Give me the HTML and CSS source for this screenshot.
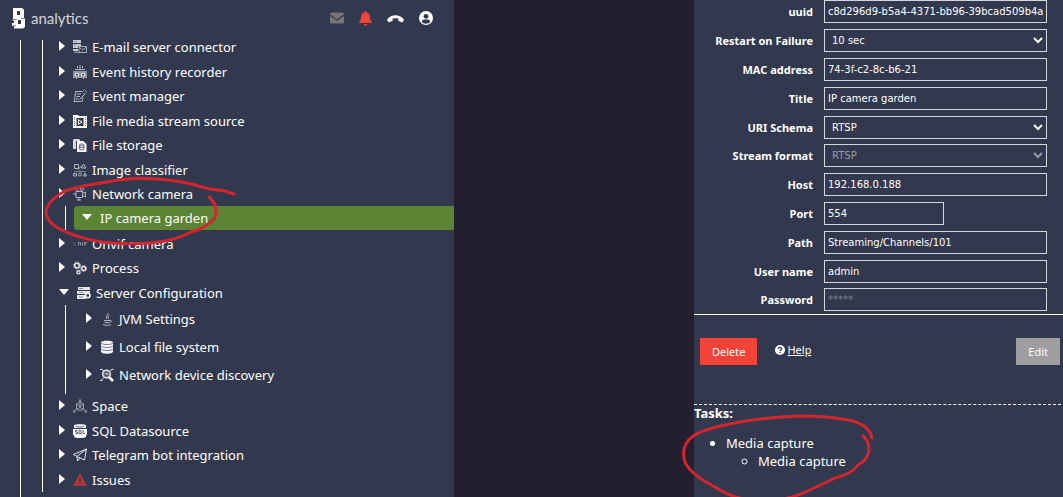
FILE: index.html
```
<!DOCTYPE html>
<html lang="en">
<head>
    <meta charset="UTF-8">
    <meta name="viewport" content="width=device-width, initial-scale=1.0">
    <title>B analytics</title>
    <link rel="stylesheet" href="styles.css">
</head>
<body>
    <aside class="sidebar">
        <header class="topbar">
            <a class="brand" href="#">
                <svg class="brand-logo" viewBox="0 0 14 21">
                    <path fill="#fff" fill-rule="evenodd" d="M1 0h9l2 1.500v8l1 1.500v8l-2 1.500H2V18H0v-3h2v-2H1zM5 3v4h3V3zM6 12v4h3v-4z"/>
                    <path stroke="#8a8fa0" stroke-width="1" d="M0 11.500h5M9 10.500h4M1 17.500h3"/>
                </svg>
                <span>analytics</span>
            </a>
            <nav class="topbar-actions">
                <button type="button" aria-label="Mail">
                    <svg width="14" height="12" viewBox="0 0 14 12"><rect y=".5" width="14" height="11" rx="1.500" fill="#757575"/><path d="M0 3l7 5 7-5" fill="none" stroke="#32384d" stroke-width="1.200"/></svg>
                </button>
                <button type="button" aria-label="Alerts">
                    <svg width="13" height="15" viewBox="0 0 13 15"><path fill="#f44336" d="M5.700 0h1.600v1.300c2.200.4 3.600 2 3.600 4.400 0 2.800.7 3.700 1.800 4.700.6.700.1 1.600-.7 1.600H1c-.8 0-1.300-.9-.7-1.600 1.100-1 1.800-1.900 1.800-4.700 0-2.400 1.400-4 3.600-4.400zM4.700 13h3.600c0 2.400-3.600 2.400-3.600 0z"/></svg>
                </button>
                <button type="button" aria-label="Hang up">
                    <svg width="17" height="9" viewBox="0 0 17 9"><path fill="#fff" d="M.3 5.300c4-5.500 12.400-5.500 16.400 0 .3.400.2.800 0 1.200l-1 1.400c-.3.400-.7.500-1.100.3l-2.700-1.100c-.4-.2-.6-.5-.6-.9l.1-1.600a9.500 9.500 0 0 0-5.800 0l.1 1.600c0 .4-.2.700-.6.900L2.400 8.200c-.4.200-.8.100-1.100-.3l-1-1.400c-.2-.4-.3-.8 0-1.200z"/></svg>
                </button>
                <button type="button" aria-label="Account">
                    <svg width="14" height="14" viewBox="0 0 14 14"><circle cx="7" cy="7" r="7" fill="#fff"/><circle cx="7" cy="5.300" r="2.400" fill="#32384d"/><path fill="#32384d" d="M2.800 11C3 9.200 4.200 8.500 5.400 8.500h3.200c1.200 0 2.400.7 2.600 2.500-2 2.200-6.400 2.200-8.400 0z"/></svg>
                </button>
            </nav>
        </header>

        <div class="tree">
            <ul class="tree-root">
                <li>
                    <div class="row">
                        <i class="arrow"></i>
                        <svg class="icon" viewBox="0 0 14 14"><path fill="#c9ccd4" d="M0 0h8v3H0zM0 4h8v2H5v2H0zM0 9h5v2H0z"/><path d="M1 1.500h3M1 5h3M1 12.500h5M3 11v2" stroke="#8a8fa0"/><path d="M6 6.500h7.500v6H6zM6 7l3.700 3L13.500 7" fill="#32384d" stroke="#a9adb9"/></svg>
                        <span>E-mail server connector</span>
                    </div>
                </li>
                <li>
                    <div class="row">
                        <i class="arrow"></i>
                        <svg class="icon" viewBox="0 0 14 14"><path fill="#9296a6" d="M0 6h14v7H0z"/><path fill="none" stroke="#b9bcc7" d="M2 4.500h10M4.500 1v2M7 0v4M9.500 1v2M3 13.500h1M10 13.500h1"/><path d="M2.500 8.500h3v2.500h-3zM8.500 8.500h3v2.500h-3z" fill="#32384d" stroke="#e4e5ea"/></svg>
                        <span>Event history recorder</span>
                    </div>
                </li>
                <li>
                    <div class="row">
                        <i class="arrow"></i>
                        <svg class="icon" viewBox="0 0 14 14"><path fill="none" stroke="#b4b7c2" d="M9 2.500H2.500l-1 10H9l1-4M.5 12.500h4M3.500 5H8M3.500 7.500H7M3 10h2.500"/><path fill="none" stroke="#c4c7d0" d="M6.500 10.500l6-6"/><circle cx="11.500" cy="3" r="2" fill="none" stroke="#7d8294"/></svg>
                        <span>Event manager</span>
                    </div>
                </li>
                <li>
                    <div class="row">
                        <i class="arrow"></i>
                        <svg class="icon" viewBox="0 0 14 14"><path fill="#fff" d="M0 1h5l1 1h8v12H0z"/><path fill="#32384d" d="M3.500 4h7v8h-7z"/><path fill="none" stroke="#fff" d="M5.500 5.700v4.600L9 8z"/><path stroke="#777c8e" stroke-dasharray="1 1" d="M1.500 3v10M12.500 3v10"/></svg>
                        <span>File media stream source</span>
                    </div>
                </li>
                <li>
                    <div class="row">
                        <i class="arrow"></i>
                        <svg class="icon" viewBox="0 0 14 14"><path fill="#d8dae0" d="M0 2l1-1h5l1 1v2H3v7H0z"/><path fill="#fff" d="M4 3h6l3.500 3v8H4z"/><path d="M3.500 3v8" stroke="#32384d"/><ellipse cx="8.700" cy="7" rx="2.300" ry="1" fill="none" stroke="#5c6174"/><path d="M6.400 7v4c0 1.300 4.600 1.300 4.600 0V7M6.400 9c0 1 4.600 1 4.600 0" fill="none" stroke="#5c6174"/></svg>
                        <span>File storage</span>
                    </div>
                </li>
                <li>
                    <div class="row">
                        <i class="arrow"></i>
                        <svg class="icon" viewBox="0 0 14 14"><path fill="none" stroke="#b4b7c2" d="M1.500 1.500h4v4h-4zM8.500 5l2-4 2.500 4zM5 6.500l4-4M.5 10.500h3v2.500h-3zM10.500 13l1.500-3 1.500 3z"/><circle cx="7" cy="11.500" r="1.500" fill="none" stroke="#b4b7c2"/><path stroke="#777c8e" d="M1 8.500h12M7 7v2"/></svg>
                        <span>Image classifier</span>
                    </div>
                </li>
                <li>
                    <div class="row">
                        <i class="arrow"></i>
                        <svg class="icon" viewBox="0 0 14 14"><path fill="none" stroke="#b4b7c2" d="M3 4.500h6.500v6H3zM9.500 6.500l3-1.500v5l-3-1.500M0 7h3M6 10.500v3M4 13h4"/><circle cx="4" cy="2.500" r="1.500" fill="none" stroke="#8a8fa0"/><circle cx="9" cy="2" r="1.500" fill="none" stroke="#a9adb9"/></svg>
                        <span>Network camera</span>
                    </div>
                    <ul class="tree-branch camera-branch">
                        <li>
                            <div class="row selected">
                                <i class="arrow open"></i>
                                <span>IP camera garden</span>
                            </div>
                        </li>
                    </ul>
                </li>
                <li>
                    <div class="row">
                        <i class="arrow"></i>
                        <svg class="icon" viewBox="0 0 14 14"><path fill="none" stroke="#8a8fa0" d="M5.500 8.500v-3h2v3M9.500 5v3.500M11.500 8.500v-3H14M11.500 7h2"/><path fill="none" stroke="#4d6485" d="M2.500 5.500H1v3h1.500"/></svg>
                        <span>Onvif camera</span>
                    </div>
                </li>
                <li>
                    <div class="row">
                        <i class="arrow"></i>
                        <svg class="icon" viewBox="0 0 14 14"><g fill="none" stroke="#e4e5ea"><circle cx="4" cy="4.500" r="2.300" stroke-width="1.500"/><circle cx="4" cy="4.500" r="3.500" stroke-dasharray="1.400 1.350"/><circle cx="10.700" cy="7.500" r="2" stroke-width="1.500"/><circle cx="10.700" cy="7.500" r="2.900" stroke-dasharray="1 1"/><circle cx="5.500" cy="11.300" r="1.600" stroke-width="1.400"/></g></svg>
                        <span>Process</span>
                    </div>
                </li>
                <li>
                    <div class="row">
                        <i class="arrow open"></i>
                        <svg class="icon" viewBox="0 0 14 14"><path fill="#e4e5ea" d="M1 1h12v3H1zM0 5h13v3H0zM0 9h9v4H0z"/><path stroke="#8a8fa0" d="M2 2.500h4M2 6.500h4M2 11h4"/><circle cx="10.800" cy="9.500" r="2.200" fill="#32384d" stroke="#fff" stroke-width="1.500"/></svg>
                        <span>Server Configuration</span>
                    </div>
                    <ul class="tree-branch server-branch">
                        <li>
                            <div class="row">
                                <i class="arrow"></i>
                                <svg class="icon" viewBox="0 0 14 14"><path fill="none" stroke="#b4b7c2" d="M8 1c1 2-3 3-1 6M9.500 3.500c-2 1-2 2-1 3.500M4 8.500h6M4.500 10.500h5M3 12.500c2 1 6 1 8 0M10 8.500c2-.5 1.500 1.500 0 2"/></svg>
                                <span>JVM Settings</span>
                            </div>
                        </li>
                        <li>
                            <div class="row">
                                <i class="arrow"></i>
                                <svg class="icon" viewBox="0 0 14 14"><path fill="#f4f4f6" d="M1 2.500C1 .3 13 .3 13 2.500v9c0 3-12 3-12 0z"/><path fill="none" stroke="#777c8e" d="M1 3c1 2 11 2 12 0M1 6c1 2 11 2 12 0M1 9c1 2 11 2 12 0"/></svg>
                                <span>Local file system</span>
                            </div>
                        </li>
                        <li>
                            <div class="row">
                                <i class="arrow"></i>
                                <svg class="icon" viewBox="0 0 14 14"><circle cx="6.500" cy="6" r="3.800" fill="#5c6174" stroke="#e4e5ea" stroke-width="1.500"/><path d="M9 9l4 4" stroke="#fff" stroke-width="2.500"/><path fill="none" stroke="#d4d6dd" d="M1 1l3 2M12.500 1L10 3M1 12.500L4 9.500M5 6.500L6.500 5 8 7M0 1.500h2.500M11 1.500h2.500M0 12.500h2.500"/></svg>
                                <span>Network device discovery</span>
                            </div>
                        </li>
                    </ul>
                </li>
                <li>
                    <div class="row">
                        <i class="arrow"></i>
                        <svg class="icon" viewBox="0 0 14 14"><path fill="none" stroke="#9da1ae" d="M7 0v9M7 8.500L1 12M7 8.500l6 3.500M3.500 5L7 3l3.500 2v5L7 12l-3.500-2zM3.500 5L7 7.500 10.500 5M0 10.500v2.500h2.500M14 10.500v2.500h-2.500M6 1.500h2"/></svg>
                        <span>Space</span>
                    </div>
                </li>
                <li>
                    <div class="row">
                        <i class="arrow"></i>
                        <svg class="icon" viewBox="0 0 14 14"><path fill="#fff" d="M1 1.500C1-.3 13-.3 13 1.500V4H1zM0 5h14v6h-1v1.500c0 2-12 2-12 0V11H0z"/><path d="M2.500 2.200c1 1 8 1 9 0" fill="none" stroke="#5c6174"/><path fill="none" stroke="#5c6174" d="M4.500 6.500h-2V8h2v1.500h-2M6 6.500h2v3H6zM7.500 9l1 1.500M10 6v3.500h2"/></svg>
                        <span>SQL Datasource</span>
                    </div>
                </li>
                <li>
                    <div class="row">
                        <i class="arrow"></i>
                        <svg class="icon" viewBox="0 0 14 14"><path fill="none" stroke="#e4e5ea" stroke-linejoin="round" d="M13.500 1L.5 6.500 4 8.500l7.500 3.500zM13.500 1L4 8.500l.5 4.500L7 10"/></svg>
                        <span>Telegram bot integration</span>
                    </div>
                </li>
                <li>
                    <div class="row">
                        <i class="arrow"></i>
                        <svg class="icon" viewBox="0 0 14 14"><path fill="#ad3a3a" stroke="#ad3a3a" stroke-linejoin="round" d="M7 1.500l6.300 11H.7z"/><path stroke="#5f2630" stroke-width="1.500" d="M7 5v4M7 10v1.500"/></svg>
                        <span>Issues</span>
                    </div>
                </li>
            </ul>
        </div>

        <!-- Marker around the camera -->
        <svg class="marker marker-camera" width="200" height="75" viewBox="40 174 200 75">
            <path d="M234 194L225 191 210 189Q201 187 192 184 170 179 145 178.500 125 178 107 182 83 185 65 191 47 201 46 212 46 222 62 230 77 238 102 242 125 245 150 243 175 241 191 232 202 230 209 223 216 219 216 213 217 204 209 197"/>
        </svg>
    </aside>

    <main class="workspace"></main>

    <section class="details">
        <form>
            <div class="fields">
                <div class="field">
                    <label for="uuid">uuid</label>
                    <input id="uuid" type="text" value="c8d296d9-b5a4-4371-bb96-39bcad509b4a">
                </div>
                <div class="field">
                    <label for="restart">Restart on Failure</label>
                    <select id="restart"><option>10 sec</option></select>
                </div>
                <div class="field">
                    <label for="mac">MAC address</label>
                    <input id="mac" type="text" value="74-3f-c2-8c-b6-21">
                </div>
                <div class="field">
                    <label for="title">Title</label>
                    <input id="title" type="text" value="IP camera garden">
                </div>
                <div class="field">
                    <label for="schema">URI Schema</label>
                    <select id="schema"><option>RTSP</option></select>
                </div>
                <div class="field">
                    <label for="format">Stream format</label>
                    <select id="format" disabled><option>RTSP</option></select>
                </div>
                <div class="field">
                    <label for="host">Host</label>
                    <input id="host" type="text" value="192.168.0.188">
                </div>
                <div class="field">
                    <label for="port">Port</label>
                    <input id="port" class="short" type="text" value="554">
                </div>
                <div class="field">
                    <label for="path">Path</label>
                    <input id="path" type="text" value="Streaming/Channels/101">
                </div>
                <div class="field">
                    <label for="user">User name</label>
                    <input id="user" type="text" value="admin">
                </div>
                <div class="field">
                    <label for="password">Password</label>
                    <input id="password" type="password" placeholder="*****">
                </div>
            </div>
            <div class="form-actions">
                <button type="button" class="btn btn-delete">Delete</button>
                <a class="help" href="#">
                    <svg width="10" height="10" viewBox="0 0 10 10"><circle cx="5" cy="5" r="5" fill="#fff"/><path d="M3.300 3.900C3.300 1.800 6.700 1.800 6.700 3.800 6.700 5 5 4.900 5 6.200M5 7v1.300" fill="none" stroke="#32384d" stroke-width="1.300"/></svg>
                    <span>Help</span>
                </a>
                <button type="button" class="btn btn-edit">Edit</button>
            </div>
        </form>

        <div class="tasks">
            <h2>Tasks:</h2>
            <ul>
                <li>Media capture
                    <ul>
                        <li>Media capture</li>
                    </ul>
                </li>
            </ul>
        </div>

        <!-- Marker around the tasks -->
        <svg class="marker marker-tasks" width="197" height="87" viewBox="680 410 197 87">
            <path d="M863 436Q869 441 869 449 869 459 858 465 852 474 835 478L810 490Q790 500 765 501 735 501 715 487 690 474 685 462 680 446 693 436 702 430 725 425 760 417 800 416 825 416 842 419 862 421 870 432L872 438"/>
        </svg>
    </section>
</body>
</html>
```
FILE: styles.css
```
/* Base */
* {
    box-sizing: border-box;
}

body {
    margin: 0;
    min-height: 100vh;
    display: grid;
    grid-template-columns: 454px 1fr 369px;
    background-color: #231f2f;
    color: #fff;
    font-family: 'Noto Sans', sans-serif;
    font-size: 13px;
}

ul {
    margin: 0;
    padding: 0;
}

button,
input,
select {
    font-family: inherit;
    color: inherit;
}

.sidebar,
.details {
    position: relative;
    background-color: #32384d;
}

.sidebar {
    display: flex;
    flex-direction: column;
}

/* Top bar */
.topbar {
    display: flex;
    align-items: center;
    justify-content: space-between;
    height: 36px;
    padding: 0 21px 0 12px;
}

.brand {
    display: flex;
    align-items: center;
    gap: 5px;
    color: #d4d6dd;
    font-family: Lato, sans-serif;
    font-size: 15px;
    text-decoration: none;
}

.brand-logo {
    width: 14px;
    height: 21px;
}

.topbar-actions {
    display: flex;
    align-items: center;
    gap: 15px;
}

.topbar-actions button {
    display: flex;
    padding: 0;
    border: none;
    background: none;
    cursor: pointer;
}

/* Tree */
.tree {
    flex: 1;
    margin: 4px 0 0 20px;
    border-left: 1px solid #fff;
}

.tree-root {
    display: flow-root;
    margin-left: 21px;
    border-left: 1px solid #fff;
    list-style: none;
}

.tree-root > li:first-child {
    margin-top: -5px;
}

.tree-root > li:nth-child(odd) {
    padding-bottom: 1px;
}

.row {
    display: flex;
    align-items: center;
    height: 24px;
    padding-left: 16px;
    white-space: nowrap;
}

.arrow {
    margin: 0 8px 2px 0;
    border-left: 6px solid #fff;
    border-top: 5px solid transparent;
    border-bottom: 5px solid transparent;
}

.arrow.open {
    border-top: 6px solid #fff;
    border-left: 5px solid transparent;
    border-right: 5px solid transparent;
    border-bottom: none;
}

.icon {
    width: 14px;
    height: 14px;
    margin-right: 5px;
}

.tree-branch {
    margin-left: 22px;
    border-left: 1px solid #fff;
    list-style: none;
}

.camera-branch {
    margin-bottom: 1px;
    padding-left: 8px;
}

.row.selected {
    padding-left: 8px;
    border-radius: 4px 0 0 4px;
    background-color: #5b8434;
}

.server-branch {
    padding-bottom: 5px;
}

.server-branch .row {
    height: 28px;
    padding-left: 20px;
}

/* Details form */
.fields {
    padding: 0 16px 3px 0;
    border-bottom: 1px solid #fff;
}

.field {
    display: grid;
    grid-template-columns: 119px 1fr;
    column-gap: 11px;
    align-items: center;
    margin-bottom: 6px;
}

.field:nth-child(5n) {
    margin-bottom: 5px;
}

.field:last-child {
    margin-bottom: 0;
}

.field label {
    font-size: 11px;
    font-weight: bold;
    text-align: right;
}

.field input,
.field select {
    width: 100%;
    height: 23px;
    padding: 0 3px;
    border: 1px solid #d4d6dd;
    border-radius: 0;
    background-color: #32384d;
    font-family: 'DejaVu Sans', sans-serif;
    font-size: 10px;
}

.field select:disabled {
    color: #999ca6;
    opacity: 1;
}

.field input::placeholder {
    color: #7d8294;
}

.field .short {
    width: 120px;
}

/* Form buttons */
.form-actions {
    display: flex;
    align-items: center;
    margin-right: 2px;
    padding: 23px 1px 39px 6px;
    border-bottom: 1px dashed #fff;
}

.btn {
    height: 27px;
    padding: 0 12px;
    border: none;
    font-size: 11px;
    cursor: pointer;
}

.btn-delete {
    background-color: #f44336;
}

.btn-edit {
    margin-left: auto;
    background-color: #9e9e9e;
}

.help {
    display: flex;
    align-items: center;
    gap: 2px;
    margin-left: 18px;
    padding-bottom: 4px;
    color: #fff;
    font-size: 11px;
}

/* Tasks */
.tasks {
    line-height: 18px;
}

.tasks h2 {
    margin: 0 0 13px;
    font-size: 13px;
    line-height: 16px;
}

.tasks ul {
    padding-left: 32px;
}

/* Red pen marks */
.marker {
    position: absolute;
    pointer-events: none;
}

.marker path {
    fill: none;
    stroke: #d4252f;
    stroke-width: 3;
    stroke-linecap: round;
    stroke-linejoin: round;
}

.marker-camera {
    top: 174px;
    left: 40px;
}

.marker-tasks {
    top: 410px;
    left: -14px;
}
```
